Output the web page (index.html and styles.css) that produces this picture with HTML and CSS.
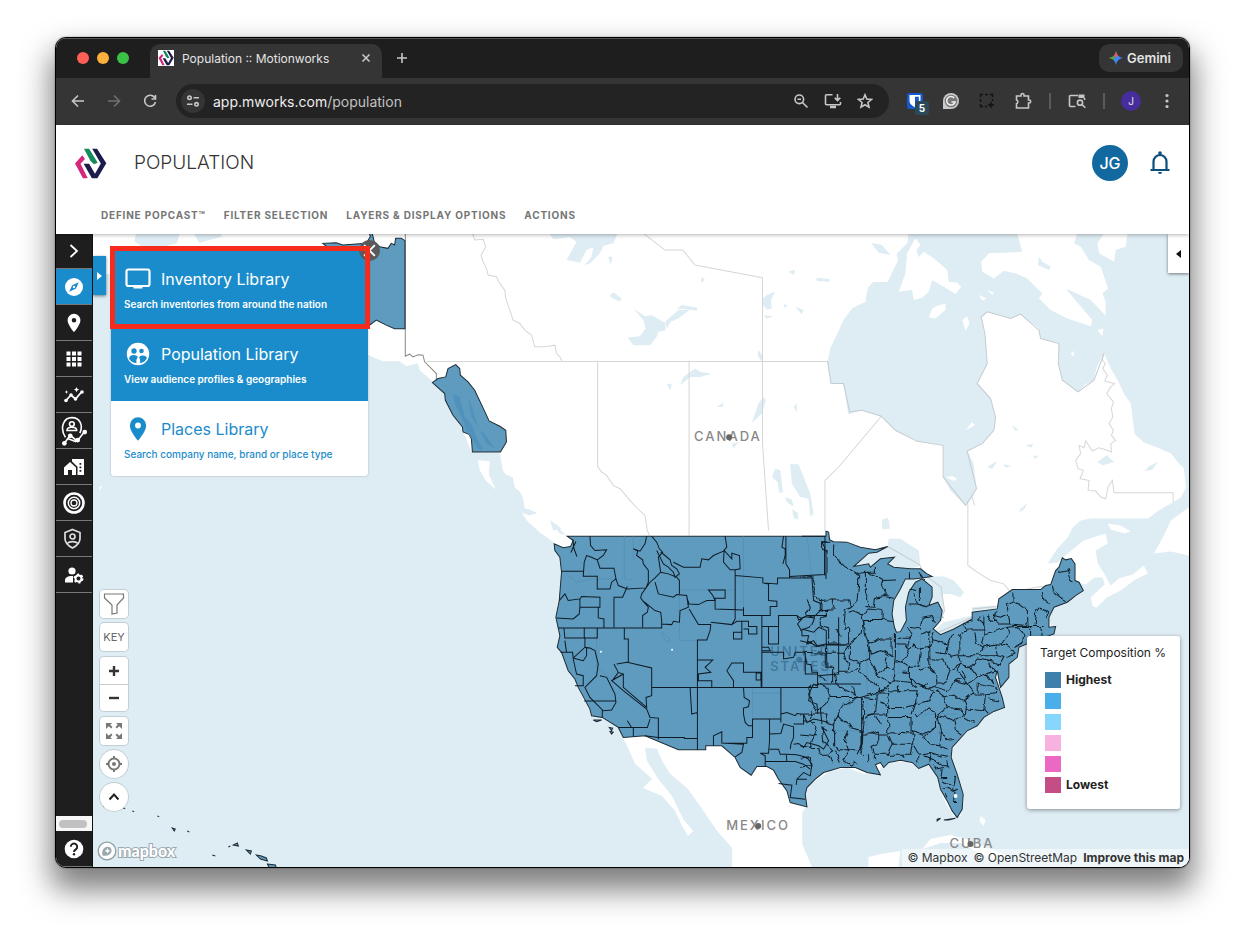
FILE: index.html
```html
<!DOCTYPE html>
<html lang="en">
<head>
<meta charset="utf-8">
<title>Population :: Motionworks</title>
<link rel="stylesheet" href="styles.css">
</head>
<body>
<svg class="defs" aria-hidden="true">
  <symbol id="logo" viewBox="0 0 96 90">
    <path d="M24 21 3 45 26 88H40L19 46 32 32Z" fill="#d6267b"/>
    <path d="M29 2H44L69 43 58 47 48 38Z" fill="#168a5b"/>
    <path d="M53 2H67L94 44 68 88H52L28 46H44L61 75 78 45Z" fill="#1d1b4b"/>
  </symbol>
  <symbol id="pin" viewBox="0 0 24 24"><path d="M12 2a7 7 0 0 0-7 7c0 5.200 7 13 7 13s7-7.800 7-13a7 7 0 0 0-7-7Zm0 9.500a2.500 2.500 0 1 1 0-5 2.500 2.500 0 0 1 0 5Z"/></symbol>
</svg>

<div class="window">
  <div class="tabstrip">
    <div class="lights"><i class="red"></i><i class="amber"></i><i class="green"></i></div>
    <div class="tab">
      <svg class="favicon"><use href="#logo"/></svg>
      <span>Population :: Motionworks</span>
      <button class="tab-close" aria-label="Close tab"><svg width="10" height="10" viewBox="0 0 10 10" class="line"><path d="m1.500 1.500 7 7m0-7-7 7"/></svg></button>
    </div>
    <button class="new-tab" aria-label="New tab"><svg width="12" height="12" viewBox="0 0 12 12" class="line"><path d="M6 1v10M1 6h10"/></svg></button>
    <button class="gemini">
      <svg width="14" height="14" viewBox="0 0 14 14"><defs><linearGradient id="gm" x1="0" y1=".3" x2="1" y2=".6"><stop offset="0" stop-color="#f4b92d"/><stop offset=".35" stop-color="#3aa757"/><stop offset=".5" stop-color="#4285f4"/></linearGradient></defs><path d="M7 0c.7 4 3 6.300 7 7-4 .7-6.300 3-7 7-.7-4-3-6.300-7-7 4-.7 6.300-3 7-7Z" fill="url(#gm)"/><path d="M7 0c.4 2.200 1.200 3.900 2.400 5L6 6 4.600 5C5.800 3.900 6.600 2.200 7 0Z" fill="#e9575a"/></svg>
      Gemini</button>
  </div>

  <div class="toolbar">
    <button class="tool" aria-label="Back"><svg width="16" height="16" viewBox="0 0 16 16" class="line"><path d="M14 8H2.500M8 2.500 2.500 8 8 13.500"/></svg></button>
    <button class="tool dim" aria-label="Forward"><svg width="16" height="16" viewBox="0 0 16 16" class="line"><path d="M2 8h11.500M8 2.500 13.500 8 8 13.500"/></svg></button>
    <button class="tool" aria-label="Reload"><svg width="16" height="16" viewBox="0 0 16 16" class="line"><path d="M12.800 4.800A5.500 5.500 0 1 0 13.500 9M13.500 2v4h-4"/></svg></button>
    <div class="omnibox">
      <button class="site" aria-label="Site information"><svg width="14" height="14" viewBox="0 0 14 14" class="line"><circle cx="3.500" cy="3.700" r="1.700"/><path d="M7.500 3.700H13M1 10.300h5.500"/><circle cx="10.500" cy="10.300" r="1.700"/></svg></button>
      <div class="url"><span>app.mworks.com</span>/population</div>
      <button class="omni" aria-label="Zoom"><svg width="16" height="16" viewBox="0 0 16 16" class="line"><circle cx="6.300" cy="6.300" r="4.300"/><path d="m9.500 9.500 5 5M4.500 6.300H8"/></svg></button>
      <button class="omni" aria-label="Install"><svg width="18" height="16" viewBox="0 0 18 16" class="line"><path d="M8.500 1.700H2.500a1 1 0 0 0-1 1v8a1 1 0 0 0 1 1h13a1 1 0 0 0 1-1V9M13.500 1v6.500M10.700 4.800l2.800 2.800 2.800-2.800"/><path d="M6 14h6" stroke-width="2.500"/></svg></button>
      <button class="omni" aria-label="Bookmark"><svg width="16" height="16" viewBox="0 0 16 16" class="line"><path d="m8 1.800 1.800 4.300 4.600.4-3.500 3 1.100 4.600L8 11.700l-4 2.400 1.100-4.600-3.500-3 4.600-.4Z"/></svg></button>
    </div>
    <button class="tool" aria-label="Bitwarden"><svg width="16" height="16" viewBox="0 0 16 16"><rect width="16" height="16" rx="2.500" fill="#1558d0"/><path d="M2.500 2h11v6c0 3-3 5-5.500 6.300C5.500 13 2.500 11 2.500 8Z" fill="#fff"/><path d="M8 3.800h3.800V8c0 1.700-2 3.200-3.800 4.200Z" fill="#1558d0"/></svg><b class="badge">5</b></button>
    <button class="tool" aria-label="Grammarly"><svg width="18" height="18" viewBox="0 0 18 18"><path d="M1 9a8 8 0 1 1 8 8H1Z" fill="#c9c9c9"/><circle cx="9" cy="9" r="6.300" fill="#777"/><path d="M12.300 6a4.300 4.300 0 1 0 .8 4H9.500" fill="none" stroke="#eee" stroke-width="1.600"/></svg></button>
    <button class="tool" aria-label="Capture"><svg width="16" height="16" viewBox="0 0 16 16" fill="none" stroke="#111" stroke-width="1.400"><path d="M1.500 4V1.500H4M6 1.500h3M11 1.500h2.500V4M13.500 6v2M1.500 6v3M1.500 11v2.500H4M6 13.500h2M12 9v6M9 12h6"/></svg></button>
    <button class="tool" aria-label="Extensions"><svg width="18" height="18" viewBox="0 0 18 18" class="line"><path d="M2.500 4h4.500V3a1.500 1.500 0 0 1 3 0v1h4.500v4h.7a1.500 1.500 0 0 1 0 3h-.7v5h-12v-4.300a2 2 0 0 0 0-3.800Z"/></svg></button>
    <i class="sep"></i>
    <button class="tool" aria-label="Search tabs"><svg width="18" height="16" viewBox="0 0 18 16" class="line"><path d="M7.500 13.500h-5a1 1 0 0 1-1-1v-9a1 1 0 0 1 1-1H10M16.500 5v2"/><path d="M10.500 1.500h6v3.500h-6Z" fill="#c7c7c7" stroke="none"/><circle cx="12" cy="9.700" r="2.600"/><path d="m14 11.500 3.300 3.300"/></svg></button>
    <i class="sep"></i>
    <button class="tool" aria-label="Profile"><span class="profile">J</span></button>
    <button class="tool" aria-label="Menu"><svg width="4" height="16" viewBox="0 0 4 16" fill="#c7c7c7"><circle cx="2" cy="2.500" r="1.600"/><circle cx="2" cy="8" r="1.600"/><circle cx="2" cy="13.500" r="1.600"/></svg></button>
  </div>

  <header class="header">
    <div class="brand">
      <svg class="logo"><use href="#logo"/></svg>
      <h1>POPULATION</h1>
      <button class="avatar" aria-label="Account">JG</button>
      <button class="bell" aria-label="Notifications"><svg width="24" height="26" viewBox="0 0 24 26"><path d="M12 2.500v2M5.500 19.500v-8a6.500 6.500 0 0 1 13 0v8M2.500 20h19" fill="none" stroke="#0b4f7d" stroke-width="2.200"/><circle cx="12" cy="3" r="1.800" fill="#0b4f7d"/><path d="M10 22h4a2 2 0 0 1-4 0Z" fill="#0b4f7d"/></svg></button>
    </div>
    <nav class="nav">
      <a href="#define">DEFINE POPCAST™</a><a href="#filter">FILTER SELECTION</a><a href="#layers">LAYERS &amp; DISPLAY OPTIONS</a><a href="#actions">ACTIONS</a>
    </nav>
  </header>

  <main class="app">
    <aside class="side">
      <button class="side-btn first" aria-label="Expand"><svg width="22" height="22" viewBox="0 0 22 22" fill="none" stroke="#fff" stroke-width="1.800"><path d="m7.500 5 6.500 6-6.500 6"/></svg></button>
      <button class="side-btn on" aria-label="Explore"><svg width="22" height="22" viewBox="0 0 22 22"><circle cx="11" cy="11" r="9" fill="#fff"/><path d="m15.800 6.200-3 6.600-6.600 3 3-6.600Z" fill="#1b8ccb"/><circle cx="11" cy="11" r="1.200" fill="#fff"/></svg></button>
      <button class="side-btn" aria-label="Places"><svg width="22" height="22" fill="#fff"><use href="#pin"/></svg></button>
      <button class="side-btn" aria-label="Grid"><svg width="22" height="22" viewBox="0 0 22 22" fill="#fff"><path d="M3.500 3.500h4v4h-4Zm5.500 0h4v4H9Zm5.500 0h4v4h-4ZM3.500 9h4v4h-4ZM9 9h4v4H9Zm5.500 0h4v4h-4Zm-11 5.500h4v4h-4Zm5.500 0h4v4H9Zm5.500 0h4v4h-4Z"/></svg></button>
      <button class="side-btn" aria-label="Trends"><svg width="22" height="22" viewBox="0 0 22 22"><path d="m3 16.500 5-5.500 4.500 4L19 7.500" fill="none" stroke="#fff" stroke-width="1.800"/><g fill="#fff"><circle cx="3" cy="16.500" r="1.800"/><circle cx="8" cy="11" r="1.800"/><circle cx="12.500" cy="15" r="1.800"/><circle cx="19" cy="8" r="1.800"/><path d="m13.500 3 .8 1.800 1.800.8-1.800.8-.8 1.800-.8-1.800-1.800-.8 1.800-.8Zm-10 3 .5 1.400 1.400.6-1.400.6L3.500 10 3 8.600 1.600 8 3 7.400Z"/></g></svg></button>
      <button class="side-btn" aria-label="Journeys"><svg width="28" height="30" viewBox="0 0 26 28" fill="none" stroke="#fff" stroke-width="1.500"><path d="M5 20C-1 10 4 1.500 11 1.500S22 8 18.500 16"/><circle cx="11" cy="7.500" r="2.200"/><path d="M6.500 13.500c0-4 9-4 9 0Zm-2.500 12 5.500-7.500 6.500 5.500 6.500-8.500M7 21l8 3"/><g fill="#fff" stroke="none"><circle cx="4" cy="25.500" r="2.200"/><circle cx="9.500" cy="18.500" r="2.200"/><circle cx="16.500" cy="22.500" r="2.200"/><circle cx="23" cy="15" r="2.200"/></g></svg></button>
      <button class="side-btn" aria-label="Buildings"><svg width="22" height="22" viewBox="0 0 22 22" fill="#fff"><path d="M1 11.500 7 6l6 5.500V19H9v-5H5v5H1Z"/><path d="M9 3h12v16h-6.500v-8.300L9 5.600Zm7.500 4v1.800h1.800V7Zm0 3.500v1.800h1.800v-1.800Zm0 3.500v1.800h1.800V14Z"/></svg></button>
      <button class="side-btn" aria-label="Targets"><svg width="24" height="24" viewBox="0 0 24 24" fill="none" stroke="#fff"><circle cx="12" cy="12" r="9.500" stroke-width="2.600"/><circle cx="12" cy="12" r="5.700" stroke-width="1.500"/><circle cx="12" cy="12" r="3" stroke-width="1.300"/></svg></button>
      <button class="side-btn" aria-label="Privacy"><svg width="24" height="24" viewBox="0 0 24 24" fill="none" stroke="#ddd" stroke-width="1.700"><path d="m10.500 2.500 7.500 3v6c0 4.500-3.500 7.500-7.500 9.500-4-2-7.500-5-7.500-9.500v-6Z"/><circle cx="10.500" cy="9.500" r="2.500"/><path d="M5 16.500c2.500-2.500 8.500-2.500 11 0"/></svg></button>
      <button class="side-btn" aria-label="User settings"><svg width="22" height="22" viewBox="0 0 22 22"><g fill="#fff"><circle cx="9" cy="7" r="3.600"/><path d="M2 18.500v-2.500c0-3 4.500-4.500 8-4v6.500Z"/></g><circle cx="15.500" cy="14.500" r="3" fill="none" stroke="#fff" stroke-width="2"/><circle cx="15.500" cy="14.500" r="4.200" fill="none" stroke="#fff" stroke-width="1.600" stroke-dasharray="2.200 2.200"/></svg></button>
      <div class="side-foot">
        <div class="hscroll"><i></i></div>
        <button class="side-btn help" aria-label="Help"><svg width="22" height="22" viewBox="0 0 22 22"><circle cx="11" cy="11" r="9.300" fill="#fff"/><path d="M7.800 8.800a3.200 3.200 0 1 1 5 2.600c-1.200.8-1.800 1.300-1.800 2.600" fill="none" stroke="#1e1e1e" stroke-width="1.900"/><circle cx="11" cy="16.300" r="1.200" fill="#1e1e1e"/></svg></button>
      </div>
    </aside>

    <section class="map">
      <svg class="canvas" viewBox="93 234 1096 632" preserveAspectRatio="xMidYMid slice" role="img" aria-label="Map of North America">
        <defs><filter id="rough" x="0" y="0" width="1" height="1"><feTurbulence type="fractalNoise" baseFrequency=".035" numOctaves="2" seed="4"/><feDisplacementMap in="SourceGraphic" scale="18" xChannelSelector="R" yChannelSelector="G"/></filter></defs>
        <rect x="93" y="234" width="1096" height="633" fill="#deecf3"/>
        <g class="land">
          <path d="M93 234V275L110 274 150 290 250 330 369 355 383 361 400 361 407 366 418 363 420 370 433 381 445 393 453 413 463 430 472 452 500 453 503 470 506 474 513 477 515 487 520 491 523 497 525 508 537 512 530 515 522 512 527 520 540 532 554 542 560 557 562 572 558 600 556 617 558 627 560 635 557 647 562 652 568 670 575 678 578 687 583 698 590 708 592 715 602 717 612 722 618 727 623 737 628 747 635 763 652 778 643 787 662 795 675 810 682 825 688 835 693 830 683 818 672 795 658 778 647 760 645 747 657 748 662 760 670 773 687 787 700 805 717 830 732 847 732 867H812L802 843V812L806 805 804 795 807 785 820 777 830 770 847 767 863 773 878 772 883 762 907 761 918 767 925 763 937 772 938 785 945 802 953 815 960 815 963 802 962 790 957 777 951 760 952 750 957 740 967 730 983 717 1004 707 1002 697 998 680 1008 677 1008 663 1018 647 1030 642 1053 633 1048 617 1053 607 1067 602 1083 590 1077 582 1085 584 1094 577 1102 577 1104 584 1090 597 1092 606 1096 607 1106 597 1120 590 1133 580 1147 573 1143 565 1132 574 1118 578 1110 585 1104 574 1097 563 1095 550 1107 543 1105 533 1083 540 1067 553 1057 562 1047 563 1056 549 1067 537 1072 527 1080 520 1090 518 1147 518 1158 510 1170 503 1180 497 1185 487 1183 468 1177 462 1170 453 1158 448 1143 442 1134 434 1133 427 1130 403 1124 395 1118 382 1110 368 1103 353 1096 367 1093 380 1085 384 1077 392 1070 386 1062 380 1058 363 1058 343 1040 338 1038 328 1020 314 1010 318 987 312 981 317 984 333 987 363 977 383 990 398 995 417 993 430 982 443 967 451 973 463 976 487 972 497 965 505 950 490 943 477 943 445 917 441 895 430 882 416 862 410 848 414 843 383 831 383 827 363 830 348 840 327 843 320 852 308 865 302 866 295 868 287 873 282 887 282 898 260 896 254 907 243 908 234Z"/>
          <path d="M868 867V856L880 853 900 850 898 867ZM1153 553 1162 537 1170 520 1188 507V555L1170 551ZM1107 523 1120 525 1130 531 1124 533 1110 529ZM922 848 930 838 950 834 966 838 985 846 1010 856 990 858 960 842 940 842ZM980 815 985 819 983 825 979 820ZM478 460 490 461 489 474 496 489 486 480 480 470ZM100 487 103 485 101 490Z"/>
          <g transform="translate(790 230) scale(.33333)">
            <path d="M375 25 350 70 345 130 325 185 365 180 370 210 395 203 415 185 425 150 460 170 495 192 512 170 500 157 475 155 470 120 430 85 400 65 385 82 378 60 390 45ZM680 10 695 65 595 70 572 95 575 125 610 145 640 122 675 130 710 145 755 190 745 205 780 240 830 265 900 288 905 270 850 205 825 175 900 210 945 257 945 215 935 190 952 175 930 110 895 90 870 50 850 40 860 10ZM920 40 925 70 970 95 975 60 1005 50 1010 10H940ZM425 235 415 262 435 265 465 240 465 222 445 225ZM515 270 525 302 537 280 530 258ZM565 195 575 212 588 205ZM590 180 605 195 610 188ZM840 370 848 380 852 362ZM465 740 490 752 500 745 485 737ZM525 600 553 585 545 575ZM920 300 935 318 938 295Z"/>
          </g>
        </g>
        <g class="water">
          <path d="M137 234 135 241 142 246 157 249 178 243 180 234ZM195 234 200 243 210 240 222 237V234Z"/>
          <path transform="translate(400 230) scale(.33333)" d="M450 12 460 28 510 22 530 35 500 90 540 97 560 60 580 52 575 80 555 105 570 100 600 70 610 48 640 40 653 10ZM625 80 632 105 638 80ZM630 195 642 187 665 205 660 214 635 203ZM702 237 735 258 755 255 795 278 797 300 775 305 770 320 750 345 700 345 683 322 720 318 737 295 730 270ZM800 295 795 275 835 240 870 238 835 265 812 275ZM830 237 845 225 890 232 892 242 850 236ZM905 140 915 150 903 158ZM840 465 850 440 885 415 900 425 935 430 900 440 870 440ZM800 462 815 460 812 480ZM950 530 970 517 968 530ZM1055 578 1075 520 1090 500 1097 510 1085 550ZM995 640 1015 635 1000 655ZM1075 360 1090 380 1085 395 1072 375ZM1087 205 1100 195 1125 185 1112 210 1115 235 1100 238 1088 225ZM1090 255 1118 258 1100 266ZM1115 740 1125 715 1140 720 1148 785 1138 788 1132 755ZM1155 800 1175 808 1180 830 1160 815ZM1175 835 1195 850 1190 868ZM1180 530 1188 520 1190 545ZM365 840 385 835 410 850 375 848ZM450 868 485 895 460 900ZM1165 125 1185 120 1180 135ZM1150 222 1163 226 1152 233Z"/>
          <path transform="translate(790 230) scale(.33333)" d="M242 38 275 45 300 75 265 68ZM78 143 118 147 118 155 80 153ZM15 230 40 240 35 252ZM0 122 15 122 10 133ZM745 80 755 95 780 110 775 120 742 105ZM0 702 25 702 40 740 60 790 70 850 60 858 55 805 30 800 5 760ZM5 840 25 865 12 865ZM10 530 18 520 20 545ZM275 870 295 868 298 895 275 895ZM590 710 620 692 605 716ZM705 645 728 640 722 652ZM638 702 662 706 645 712ZM727 676 743 676 735 686ZM665 585 685 600 672 600ZM685 840 710 818 700 838ZM920 695 948 675 970 695 935 705ZM1062 722 1075 708 1100 695 1085 718Z"/>
          <path transform="translate(800 500) scale(.33333)" d="M160 198 215 155 262 138 265 115 300 115 355 150 360 195 330 205 240 200ZM245 58 262 52 268 80 250 88ZM315 235 300 265 280 300 275 340 285 395 300 393 318 360 315 320 325 275 345 245 400 260 385 310 420 360 430 335 425 280 450 280 480 290 490 275 460 240 430 228 395 228ZM400 390 430 365 515 345 515 358 425 403ZM515 335 515 320 580 315 590 325ZM655 35 680 8 665 32Z"/>
          <path d="M551 522 557 524 562 531 566 535 560 533ZM690 834 700 840 710 860 700 850Z"/>
        </g>
        <g class="borders">
          <path class="strait" transform="translate(400 230) scale(.33333)" d="M17 10V378L30 372 40 380 55 374 70 375 75 395 110 430 110 450"/>
          <path transform="translate(400 230) scale(.33333)" d="M80 394H1285M218 10 225 30 250 28 258 50 244 75 248 90 262 120 265 135 290 140 300 160 315 180 318 205 330 240 340 270 360 280 375 300 395 315 405 350 435 350 465 345 470 370 480 380 487 394M593 392V708L605 725 620 735 640 765 660 775 690 810 710 832 735 855 742 900 752 925 775 970M867 392V915M1087 143V640L1105 900M730 10 795 60H848L885 105 1087 143"/>
          <path transform="translate(790 230) scale(.33333)" d="M104 900V750L145 710 273 558M532 810V900V1005L560 1025 600 1050 640 1060 660 1085 750 1068 830 1070M938 370 935 390 944 400 936 415 950 435 942 452 972 460 960 470 948 490 968 515 962 535 966 560 955 580 968 600 962 615 975 630 960 640 962 665 945 658 925 652 905 662 885 632 880 652 865 645 870 670 855 690 862 715 878 720 868 745 895 750 892 780 915 782 930 800 945 805 952 770 965 750 970 787H1147V815M545 800 552 825"/>
          <path class="shore" transform="translate(790 230) scale(.33333)" d="M112 392 122 460H160L178 545 215 540 273 558 315 600 380 633 458 645V740L525 825 558 775 530 662 575 640 610 600 615 560 600 505 560 460 590 400 583 310 572 260 590 245 660 265 690 252 745 300 750 325 805 340 803 400 815 450 862 485 910 450 940 370"/>
          <path class="shore" transform="translate(800 500) scale(.33333)" d="M262 138 357 192 375 225 422 260 432 330 420 360M515 325 590 318M415 395 515 350"/>
        </g>
        <g class="areas">
          <g transform="translate(540 500) scale(.33333)">
            <path d="M82 107H857V92L865 95 868 118 880 124 920 125 960 140 1005 148 1042 138 1010 155 985 158 940 198 985 190 990 200 1020 175 1062 170 1042 190 1060 200 1110 205 1140 205 1160 220 1175 228 1120 235 1095 235 1080 265 1060 300 1055 340 1062 380 1068 395 1080 393 1098 360 1095 320 1105 275 1125 245 1145 235 1175 260 1175 290 1165 315 1192 305 1205 330 1200 360 1178 385 1200 402 1240 385 1295 355V335L1370 325 1375 295 1415 267H1500L1515 255 1530 252 1545 210 1555 200 1565 172 1575 178 1592 174 1603 190 1603 240 1615 245 1628 270 1605 285 1580 305 1540 320 1525 350V380L1545 378 1540 400 1470 425 1435 440 1430 470 1405 490V530L1380 560 1370 510 1365 530 1375 560 1385 590 1392 620 1360 632 1330 650 1310 675 1280 690 1235 740 1232 770 1250 820 1268 880 1265 925 1250 950 1235 930 1220 900 1200 865 1192 830 1165 790 1135 803 1115 785 1080 778 1045 785 1030 800 1020 785 1005 792 1020 822 980 815 945 800 900 800 850 815 825 835 800 860 795 880 800 918 750 905 740 870 715 835 700 808 680 797 650 797 633 823 600 800 585 770 545 735H497V747H415L315 705 250 710 235 680 187 650 155 645 150 625 115 560 105 535 85 510 65 455 52 440 60 405 48 350 58 300 65 215 60 170 45 150 43 130 70 142 92 138 100 120Z"/>
            <path d="M160 658H185L170 663ZM208 680 218 682 215 690ZM210 692 220 694 215 700ZM1190 955 1200 952 1190 960ZM1210 957 1245 952 1225 957Z"/>
          </g>
          <g transform="translate(400 230) scale(.33333)">
            <path d="M98 457 115 445 138 440 145 415 168 403 180 415 182 435 205 455 225 480 258 550 268 572 300 588 318 600 320 635 302 665H218L215 625 208 612 190 605 188 590 160 555 137 510 135 490Z"/>
            <path d="M-82 10-76 35-60 50-35 55-25 40-15 45-12 25 5 25 16 32V296H-15L-40 285-70 270-90 285-90 60-100 48-200 65-230 40-190 38-170 45-100 40-88 20-90 10Z"/>
          </g>
          <path class="isles" d="M104 805 106 806ZM124 807 126 808ZM133 810 135 811ZM158 815 160 816ZM173 827 176 828 175 830ZM188 830 190 831ZM213 854 216 855ZM229 846 231 845ZM234 844 238 842 239 845ZM247 849 252 850 251 853ZM257 854 262 855 267 857 268 860 261 858ZM268 863 276 864 277 867H270Z"/>
        </g>
        <g class="tint" transform="translate(540 500) scale(.33333)"><path d="M253 107V235L280 240M280 107V180M418 220V420H472M418 268H585M610 107V320M637 560V650M637 577H722M80 220 110 245 160 235 230 235M170 382V500L230 550M820 350 830 440 860 500 868 620M800 107 815 230M860 690H960M1075 410V520M1140 400V500M1150 350H1210M1100 640H1250"/><path d="M365 395 385 410 390 425 375 420Z"/><path d="M1050 525 1100 510M980 450V690" /></g>
        <g class="tint" transform="translate(400 230) scale(.33333)"><path class="solid" d="M160 490 180 500 195 560 215 580 230 620 250 660 235 655 200 600 185 560 165 520ZM205 500 215 560 235 590 220 540ZM240 600 260 640 285 655 255 610Z"/></g>
        <g class="place faint"><text x="770" y="655">UNITED</text><text x="770" y="670">STATES</text></g>
        <circle cx="799" cy="659" r="3" fill="#2a5d80" opacity=".6"/>
        <g class="lines">
          <path transform="translate(540 500) scale(.33333)" d="M150 107 152 135 165 150 200 148 190 165 172 178 155 170 140 165 133 185 130 227H172V265H210L215 245 228 235 222 203H180L172 178M65 212H130M172 235V265M228 235 235 255 262 265 318 262 325 245 325 210 310 190 308 178 290 165 293 152 280 145 300 152 315 130 320 107M262 258 248 290H222V380M335 107 350 125 358 145 368 155 355 170 362 215 345 232 330 245 318 262 305 280 302 292 308 300 325 320 322 335 308 345V380M350 150 370 190 385 200 400 215 405 230 418 220 410 205 395 195 390 178 375 165 362 155M400 185 430 200 480 200 485 175 505 178 520 165 550 152 560 140 555 107M362 215 385 220 410 230 418 240V280M345 245 355 280 400 290 410 282 440 285 445 320 420 330 418 365 400 362 395 372 365 370V382M308 300 345 330 362 335 365 360M440 290 447 310 475 312 500 300 525 300 518 285 505 268H555V293H525V325L610 328M447 325 475 372 512 372 510 390 500 418H472V560M512 365 575 372 585 355V208L570 208 550 185 552 150 575 175 575 158 598 165 600 205 585 208M585 225 668 232V247L712 250V232H815L820 300 845 310V330H865M668 247 685 250V300L710 302V318H690V345H610V320M737 107V190L748 208V232M748 228 853 222V140L845 125H870M730 107 725 140 735 145V165L728 190M58 300 75 280 85 300 120 295 125 288 180 290V320H120L118 340 100 355 50 352M120 295V325M175 320V352L192 355V382M55 382H365V360M253 382V415H265V485M133 382V412H172V382M72 382 75 412H133M75 420 80 455H62M135 410V440L100 472 98 455 75 455M135 440 150 442 165 450 175 490 170 525 135 560 150 590 190 630 215 628 228 605 225 580 210 550 200 530 180 525M98 472 130 480 140 465 140 440M100 475 110 520 130 525 130 555 105 555M133 601H228M230 490 262 485 335 502V560M222 490 235 515 250 520 215 540 250 570 320 625 330 650 355 652V715M235 515 217 540M250 520V560L320 620 318 590 335 585V560M187 628V650M235 680H322L330 655M280 680V707M262 660 275 680M335 560H832V520H795V455M450 560 455 640 472 635V560V747M315 705 355 710H433V713H472M472 478H518L495 500 512 515 475 520V540H515V560M605 362V415H580V395L605 395M605 362H625V378H650V400H625V385H610M575 372 590 362 610 362M665 345V450H690L685 440H665V560M665 378H715M685 378V430H715V345H770L775 358 800 345 820 350 845 325M665 455H730V475L760 470 765 455H795M560 510 575 487H610V515H663V558M648 517H662V538H648ZM560 510 580 540V560M610 560 612 590 628 600 625 618 610 622V640L615 665 625 675 637 675M722 560V655H637V710H620V727H545M520 735V705L545 693V727L610 730 605 755 585 768M688 655V720L685 757 660 757 675 765V797M675 782H740L738 760H720L715 745 688 745M688 700 722 698 730 670 760 678V710L752 730 750 745M722 640 740 635 765 645 770 638 790 640V670H760M722 640V665M770 345 785 355 772 370 785 392 785 405 805 405 800 430 820 420 830 435 858 430M800 345 860 345M785 385 820 395 835 380 858 390V430L895 432M793 455 800 490 812 492 815 515H832V555L820 550 810 570 805 600 815 605 830 610 832 640M832 525 895 520V350M760 730 775 728 790 740 800 725 835 735 850 745 865 720 845 680 860 690M740 760 770 762 800 770 815 790 810 825 790 815 770 835 768 852M740 782 765 782 790 790 810 805M770 835 800 835M715 848 755 853 750 890 795 895M840 620 845 670M790 640 800 665 820 655 845 660 865 665"/>
          <g transform="translate(800 500) scale(.33333)"><g filter="url(#rough)">
            <path d="M85 124H67V150L80 155V232M100 132V165L135 200 175 225V250L170 300 150 320 145 298H80L55 300 35 240 35 228 0 230M170 220 195 215H225V200M195 215V270L205 310 215 320M200 215 225 225 250 240 245 260 255 285 225 290 222 320 195 318M250 240 290 238M255 285 280 290M95 298 105 325H78V350L60 355V375L85 385V430H145V380H130L135 330 150 320M60 300V330L80 335M145 335 160 330 185 340 190 370 185 400 150 430M185 340 205 325 245 330V360H190M245 355 275 360M190 360 195 400 205 430 240 415 275 415V470M0 350 40 355 30 380 0 390M0 420 40 430 60 440 78 430 80 500M10 455 75 458V500H100V550M78 458H130L150 430M130 458 145 490 140 515H100M150 430V475L175 485 205 470V430M205 430 210 460 245 450 280 470M175 485V515L220 545M145 515 170 500M205 470 215 490 230 520 255 500 280 505 285 470V400M105 515 110 555 180 590 250 570 270 545 230 520M220 545 240 580 265 560M280 505 285 540 270 545M285 540 330 545 330 500 300 480 285 485M305 515 330 515M285 430 315 430 330 445 320 470 300 480M290 410 330 410 320 440M320 380 335 400 330 410M330 380 360 385 365 350 395 345 405 365M340 280 355 310H325M355 310 380 320M330 265 350 270M360 260 360 300M330 215V235M355 215 370 235M365 400 385 390V440L360 445 340 430 330 445M385 440 400 420 395 395M360 445 355 500 330 500M355 510 380 500 405 520 410 550 385 565 350 550 330 530M385 440V490L405 520M400 420 440 430 460 400M440 430 435 460 455 470 475 465V395M405 455 435 460M385 475 430 475 445 510 430 550 410 550M475 400 500 395 505 385H550V345M500 385 490 370 520 360M520 395 525 425 545 440 530 465H475M475 465 480 490 445 510M545 440 585 430 590 465H530M480 490 510 500 530 475M510 500 530 530 500 550 470 510 480 490M530 530 560 520 580 510 560 480 530 475M550 370 555 400 620 380 625 400 605 430 585 430M555 400 545 430M590 465 610 470 600 490 560 480M600 430 625 440 640 460 620 470M620 380 650 378H735M650 378 670 400 665 425 640 440M690 378V415M720 378 725 405M625 370 620 340 600 350 580 345 590 335M625 330 620 310 640 300V275M580 345 590 370 625 370M640 300 680 330 682 375 625 370M725 275 730 295 750 310M700 378 705 340 720 320 740 335 740 350M755 255 760 275 785 295 795 300M770 213 800 208 810 240 818 245M30 560 55 550 80 560 90 590 75 610 50 630 35 605 25 580ZM90 590 185 590 190 640 185 690 150 680 110 640 130 610 175 590M190 590 230 595V580H265M230 595 225 640 195 650M240 600 265 620V570H350L345 610 300 620 265 620M195 650 215 640 262 640M262 625V700H190M262 650H335V700L262 695M345 610 335 640M345 640 350 650 385 620 405 640V680L370 700 335 690M345 610 385 600 400 575M405 560 440 570 465 540 500 550 520 575 490 600 460 580 430 590 405 570M430 590 440 620 410 645M440 620 480 625 495 640 460 660 440 650M490 600 500 625 495 650 520 665M500 625 550 630 555 580H520M555 580 590 575M550 630 560 640M530 575 530 550 580 560 590 570M560 520 580 550M580 510 595 520M565 595 595 600M460 660 465 690 480 700M440 650 410 645 420 690 440 720 465 715M405 680 370 710 385 730 415 735 420 690M415 735 445 745M262 700 275 730H340V700M340 735 355 760 390 755 420 765 445 770M355 760V785M275 730 260 760H225V775M335 735 330 760 310 760V772M258 760H310M210 700 235 690V730L215 740 225 765M185 690 185 730 175 760 205 762V785M110 640 100 670 75 665 80 640 0 640M100 670 100 735 120 750H175M65 680 70 720 100 750 85 760 95 790M35 660 50 680 30 740 55 740 60 760 85 760M0 700 50 705M0 735 30 740M0 775 30 770 35 790 0 800M105 750 120 785M145 750 130 775 150 790 165 780 175 790M145 690 135 720 145 750M5 660 50 665M35 630 30 660M390 755 385 780M370 765 415 785 430 795 445 795 442 780M400 790 410 805 430 800M425 805 420 840 450 850 460 855 465 825M418 830 440 830M425 865 445 860 460 870 475 865M435 880 440 890M460 860V905M460 905H480M385 545 370 560 410 575M485 510 495 530 465 540M255 500 260 470M225 645 240 670M330 545 350 560M535 345 535 355 550 370M560 345 570 360 590 365M110 385 120 410M20 300 30 320 15 345M160 560 165 585M290 560 295 575M60 520 75 540"/>
          </g>
          <path d="M5 107H74V225M80 433H140M50 550H182M184 590V740M170 760 186 730 188 690" /></g>
          <path class="strong" d="M573 539 574 548 577 556M576 541 571 552"/>
        </g>
        <g fill="#fff"><circle cx="601" cy="651" r="1"/><circle cx="672" cy="649" r="1"/><circle cx="955" cy="795" r="2"/></g>
        <g class="place"><text x="694" y="441">CANADA</text><text x="726" y="829">MEXICO</text><text x="949" y="847">CUBA</text></g>
        <g fill="#666"><circle cx="729" cy="437" r="3"/><circle cx="758" cy="825" r="3"/><circle cx="970" cy="843" r="3"/></g>
      </svg>

      <button class="drawer-left" aria-label="Show panel"></button>
      <button class="drawer-right" aria-label="Show details"></button>

      <div class="library">
        <a href="#inventory" class="card blue">
          <svg width="28" height="26" viewBox="0 0 28 26"><rect x="2.500" y="3.500" width="23" height="16.500" rx="2" fill="none" stroke="#fff" stroke-width="2.200"/><path d="M9.500 20h9v2.500h-9Z" fill="#fff"/></svg>
          <strong>Inventory Library</strong><small>Search inventories from around the nation</small>
        </a>
        <a href="#population" class="card blue">
          <svg width="28" height="28" viewBox="0 0 28 28"><circle cx="14" cy="14" r="11.200" fill="#fff"/><g fill="#1b8ccb"><circle cx="10" cy="11" r="2.700"/><circle cx="17.500" cy="11" r="2.300"/><path d="M5 18.500c.5-4.200 7-4.500 9-1.500-1.500 1.500-2 3.500-1.500 6.300C9 23 6 21 5 18.500Zm10-1.500c2-2.500 7-2 8 .8-1 3-3.500 5-6.800 5.500 0-3-.2-4.500-1.200-6.300Z"/></g></svg>
          <strong>Population Library</strong><small>View audience profiles &amp; geographies</small>
        </a>
        <a href="#places" class="card">
          <svg width="28" height="28" fill="#1b8ccb"><use href="#pin"/></svg>
          <strong>Places Library</strong><small>Search company name, brand or place type</small>
        </a>
        <button class="close" aria-label="Close"><svg width="15" height="15" viewBox="0 0 14 14" fill="none" stroke="#fff" stroke-width="1.800"><path d="m2 2 10 10m0-10L2 12"/></svg></button>
        <i class="highlight"></i>
      </div>

      <div class="controls">
        <button aria-label="Filter"><svg width="22" height="24" viewBox="0 0 22 24" fill="none" stroke="#777" stroke-width="1.200"><path d="M1.500 2h19v4L14 13v8l-5 1v-9L1.500 6Z"/></svg></button>
        <button class="key">KEY</button>
        <div class="zoom">
          <button aria-label="Zoom in"><svg width="12" height="12" viewBox="0 0 12 12" stroke="#333" stroke-width="2.400"><path d="M6 1v10M1 6h10"/></svg></button>
          <button aria-label="Zoom out"><svg width="12" height="12" viewBox="0 0 12 12" stroke="#333" stroke-width="2.400"><path d="M1 6h10"/></svg></button>
        </div>
        <button aria-label="Full screen"><svg width="18" height="18" viewBox="0 0 18 18"><path fill="#777" d="M1 1h6L5.200 2.800l2.300 2.300-1.400 1.400-2.300-2.300L1 7ZM17 1v6l-2.800-2.800-2.300 2.300-1.400-1.400 2.300-2.300L11 1ZM1 17v-6l2.800 2.800 2.300-2.300 1.400 1.400-2.300 2.300L7 17ZM17 17h-6l1.800-1.800-2.300-2.300 1.400-1.400 2.300 2.300L17 11Z"/></svg></button>
        <button class="round" aria-label="Locate"><svg width="18" height="18" viewBox="0 0 18 18" fill="none" stroke="#777" stroke-width="2"><circle cx="9" cy="9" r="5.500"/><path d="M9 1v3M9 14v3M1 9h3M14 9h3"/><circle cx="9" cy="9" r="2" fill="#777" stroke="none"/></svg></button>
        <button class="round" aria-label="Collapse"><svg width="14" height="10" viewBox="0 0 14 10" fill="none" stroke="#222" stroke-width="2"><path d="m2.500 7.500 4.500-5 4.500 5"/></svg></button>
      </div>

      <div class="mapbox"><svg width="20" height="20" viewBox="0 0 20 20"><circle cx="10" cy="10" r="8.800" fill="#fff" stroke="#8f9da4" stroke-width="1.300"/><path d="M5.500 14.500c-.8-3 0-8 4.500-8.700 3-.4 5 1.800 4.500 4.500-.6 4-5.500 5-9 4.200Z" fill="#9ba8ae"/><path d="m10.500 7 .9 2 2 .9-2 .9-.9 2-.9-2-2-.9 2-.9Z" fill="#fff"/></svg><span>mapbox</span></div>

      <div class="legend">
        <h2>Target Composition %</h2>
        <ul>
          <li><i class="c1"></i>Highest</li><li><i class="c2"></i></li><li><i class="c3"></i></li><li><i class="c4"></i></li><li><i class="c5"></i></li><li><i class="c6"></i>Lowest</li>
        </ul>
      </div>

      <div class="credits"><a href="#mapbox">© Mapbox</a><a href="#osm">© OpenStreetMap</a><a href="#improve"><b>Improve this map</b></a></div>
    </section>
  </main>
</div>
</body>
</html>
```
FILE: styles.css
```css
* { box-sizing: border-box; }
body {
  margin: 0;
  min-height: 100vh;
  padding: 37px 55px 73px;
  display: flex;
  background: #fff;
  font-family: Inter, "Liberation Sans", sans-serif;
}
button {
  border: 0;
  padding: 0;
  background: none;
  font: inherit;
  color: inherit;
  display: flex;
  align-items: center;
  justify-content: center;
}
a { color: inherit; text-decoration: none; }
.defs { position: absolute; width: 0; height: 0; }
.line { fill: none; stroke: #c7c7c7; stroke-width: 1.6px; }
.window {
  flex: 1;
  min-width: 0;
  display: flex;
  flex-direction: column;
  border: 1px solid #000;
  border-radius: 11px;
  overflow: hidden;
  background: #fff;
  box-shadow: 0 0 2px rgba(0, 0, 0, .4), 0 18px 30px 4px rgba(0, 0, 0, .5);
}

/* browser chrome */
.tabstrip {
  height: 40px;
  display: flex;
  align-items: center;
  padding: 0 6px 0 21px;
  background: #1e1e1e;
  box-shadow: inset 0 1px 0 #555;
  color: #e4e4e4;
  font-size: 12px;
}
.lights { display: flex; gap: 8px; width: 73px; }
.lights i { width: 12px; height: 12px; border-radius: 50%; }
.red { background: #fe5f57; }
.amber { background: #fdb03c; }
.green { background: #3bc146; }
.tab {
  align-self: flex-end;
  width: 232px;
  height: 34px;
  padding: 0 9px 6px 8px;
  display: flex;
  align-items: center;
  background: #353535;
  border-radius: 10px 10px 0 0;
}
.tab span { flex: 1; margin-left: 8px; }
.favicon { width: 16px; height: 16px; background: #fff; }
.tab-close { width: 14px; height: 14px; }
.new-tab { width: 40px; height: 30px; }
.gemini {
  margin-left: auto;
  height: 28px;
  width: 84px;
  gap: 4px;
  padding-right: 2px;
  border-radius: 10px;
  background: #353535;
  font-size: 13px;
  font-weight: 600;
}
.toolbar {
  height: 47px;
  display: flex;
  align-items: center;
  padding: 0 4px 1px;
  background: #353535;
  color: #e4e4e4;
}
.tool { width: 36px; height: 34px; flex: none; position: relative; }
.dim { opacity: .4; }
.omnibox {
  flex: 1;
  height: 34px;
  margin: 0 8px;
  padding: 0 8px 0 5px;
  border-radius: 17px;
  background: #232323;
  display: flex;
  align-items: center;
}
.site { width: 24px; height: 24px; border-radius: 50%; background: #353535; }
.url { flex: 1; margin-left: 8px; font-size: 14px; color: #c2c2c2; }
.url span { color: #eee; }
.omni { width: 32px; height: 32px; }
.badge {
  position: absolute;
  right: 4px;
  bottom: 3px;
  width: 14px;
  height: 14px;
  border-radius: 3px;
  background: #2a4a59;
  color: #fff;
  font-size: 10px;
  line-height: 14px;
}
.sep { width: 2px; height: 16px; margin: 0 8px; background: #5a5a5a; }
.profile {
  width: 20px;
  height: 20px;
  border-radius: 50%;
  background: #472c9c;
  font-size: 10px;
  line-height: 20px;
}

/* page header */
.header {
  position: relative;
  z-index: 1;
  height: 109px;
  background: #fff;
  box-shadow: 0 1px 4px rgba(0, 0, 0, .3);
}
.brand { height: 76px; padding: 0 17px 0 18px; display: flex; align-items: center; }
.logo { width: 33px; height: 31px; }
.brand h1 {
  flex: 1;
  margin: 0 0 0 27px;
  padding-bottom: 2px;
  font-size: 19px;
  font-weight: 300;
  color: #333;
}
.avatar {
  width: 36px;
  height: 36px;
  border-radius: 50%;
  background: #12699f;
  color: #fff;
  font-size: 16px;
  font-weight: 500;
}
.bell { margin-left: 20px; }
.nav {
  display: flex;
  gap: 18px;
  padding: 7px 0 0 45px;
  font-size: 10px;
  line-height: 14px;
  font-weight: 700;
  letter-spacing: 0.08em;
  color: #757575;
}

/* side rail */
.app { flex: 1; display: flex; min-height: 0; }
.side {
  width: 37px;
  background: #1e1e1e;
  display: flex;
  flex-direction: column;
  border-right: 1px solid #111;
}
.side-btn { height: 36px; flex: none; border-bottom: 1px solid #777; }
.side-btn.first { height: 35px; }
.side-btn.on { background: #1b8ccb; }
.side-foot { margin-top: auto; }
.hscroll { height: 15px; padding: 4px 5px 3px 3px; background: #f7f7f7; }
.hscroll i { display: block; height: 8px; border-radius: 4px; background: #c1c1c1; }
.help { width: 100%; }

/* map */
.map { flex: 1; position: relative; overflow: hidden; background: #deecf3; }
.canvas { position: absolute; inset: 0; width: 100%; height: 100%; }
.land { fill: #fff; }
.water { fill: #deecf3; }
.borders path { fill: none; stroke: #d6d6d6; stroke-width: 3px; }
.borders .shore { stroke: #c4ccd1; }
.borders .strait { stroke: #888; }
.areas path { fill: #5f9bbf; stroke: #1d2c36; stroke-width: 3px; }
.areas .isles { stroke-width: 1px; }
.tint path { fill: none; stroke: #518db3; stroke-width: 2px; }
.tint .solid { fill: #5092bb; stroke: none; }
.lines path { fill: none; stroke: #0e1b24; stroke-width: 3px; }
.lines .strong { stroke-width: 1px; }
.place { font-size: 13px; letter-spacing: 2px; fill: #888; font-weight: 500; }
.place.faint { fill: #3f7599; }

.drawer-left, .drawer-right { position: absolute; }
.drawer-left {
  left: 0;
  top: 22px;
  width: 13px;
  height: 39px;
  background: #1b8ccb;
  box-shadow: 0 1px 3px rgba(0, 0, 0, .5);
}
.drawer-left::before { content: ""; border: 4px solid transparent; border-left: 5px solid #fff; border-right: 0; }
.drawer-right {
  right: 0;
  top: 0;
  width: 21px;
  height: 39px;
  background: #fff;
  box-shadow: 0 1px 3px rgba(0, 0, 0, .5);
}
.drawer-right::before { content: ""; border: 4px solid transparent; border-right: 5px solid #111; border-left: 0; }

.library {
  position: absolute;
  left: 18px;
  top: 17px;
  width: 257px;
  border-radius: 3px;
  box-shadow: 0 0 2px rgba(0, 0, 0, .3);
  background: #fff;
}
.card {
  height: 75px;
  padding: 13px 13px 12px;
  display: grid;
  grid-template-columns: 28px 1fr;
  grid-template-rows: 29px 21px;
  column-gap: 9px;
  align-items: center;
  color: #1b8ccb;
}
.card.blue { background: #1b8ccb; color: #fff; }
.card strong { font-size: 16px; font-weight: 400; }
.card small { grid-column: 1 / 3; font-size: 10px; font-weight: 500; white-space: nowrap; }
.card.blue small { font-weight: 600; }
.close {
  position: absolute;
  right: -12px;
  top: -11px;
  width: 21px;
  height: 21px;
  border-radius: 50%;
  background: #5a5a5a;
}
.highlight {
  position: absolute;
  left: -1px;
  right: -2px;
  top: -5px;
  height: 83px;
  border: 5px solid #f52b1c;
}

.controls {
  position: absolute;
  left: 7px;
  bottom: 56px;
  display: flex;
  flex-direction: column;
  gap: 5px;
}
.controls > * {
  width: 28px;
  height: 28px;
  border-radius: 4px;
  background: #fff;
  box-shadow: 0 0 0 1px rgba(0, 0, 0, .12);
}
.controls .zoom { height: 54px; margin: 1px 0; }
.zoom button { width: 28px; height: 27px; }
.zoom button + button { border-top: 1px solid #ccc; }
.controls .round { border-radius: 50%; }
.key { font-size: 11px; color: #666; }

.mapbox {
  position: absolute;
  left: 4px;
  bottom: 6px;
  display: flex;
  align-items: center;
  gap: 1px;
}
.mapbox span {
  font-family: Lato, sans-serif;
  font-size: 16px;
  line-height: 20px;
  font-weight: 900;
  color: #fff;
  -webkit-text-stroke: 2px #9aa8b0;
  paint-order: stroke fill;
}

.legend {
  position: absolute;
  right: 9px;
  bottom: 58px;
  width: 153px;
  padding: 9px 13px 14px;
  border-radius: 3px;
  background: #fff;
  box-shadow: 0 1px 4px rgba(0, 0, 0, .4);
  color: #222;
}
.legend h2 { margin: 0 0 8px; font-size: 12px; line-height: 16px; font-weight: 400; white-space: nowrap; }
.legend ul { margin: 0; padding: 0 0 0 5px; list-style: none; }
.legend li { height: 21px; display: flex; align-items: center; gap: 5px; font-size: 12px; font-weight: 700; }
.legend li i { width: 16px; height: 16px; }
.c1 { background: #3f7fab; }
.c2 { background: #4aaeea; }
.c3 { background: #87d7fd; }
.c4 { background: #f7b2e0; }
.c5 { background: #ec69c3; }
.c6 { background: #c54d86; }

.credits {
  position: absolute;
  right: 0;
  bottom: 0;
  display: flex;
  gap: 6px;
  padding: 0 5px;
  background: rgba(255, 255, 255, .5);
  font-size: 12px;
  line-height: 18px;
  color: #333;
}
```
